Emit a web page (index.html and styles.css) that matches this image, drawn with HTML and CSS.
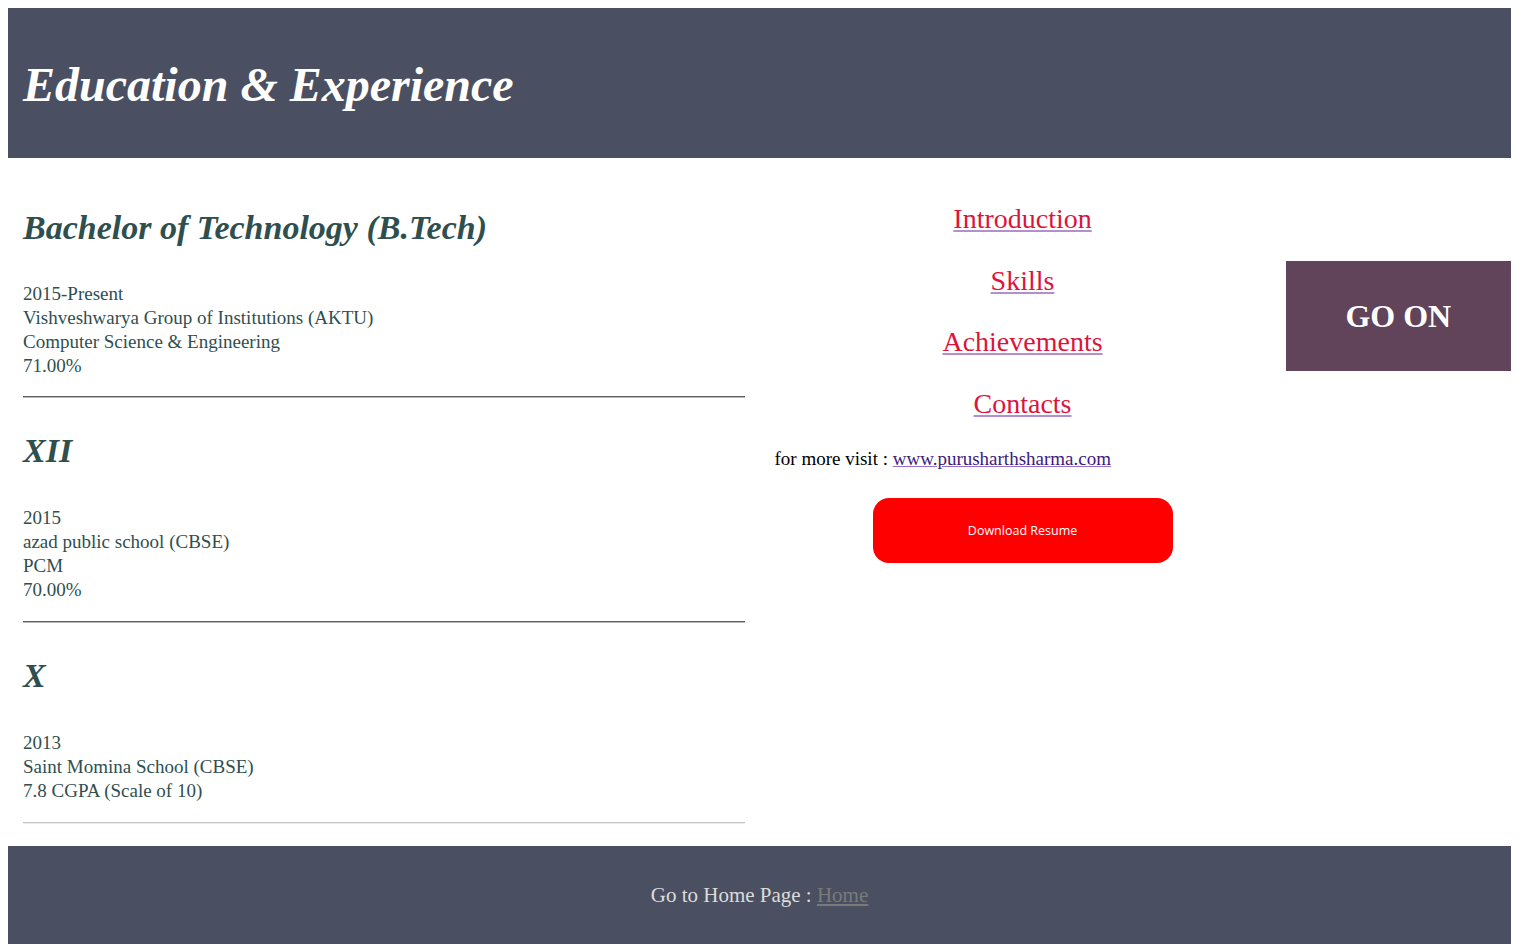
FILE: index.html
```html
<!DOCTYPE html>
<html lang="en">
<head>
<meta charset="utf-8">
<title>Education &amp; Experience</title>
<link rel="stylesheet" href="styles.css">
</head>
<body>
<header class="top">
  <h1 class="title">Education &amp; Experience</h1>
</header>
<main class="main">
  <section class="edu">
    <div class="entry">
      <h2 class="degree">Bachelor of Technology (B.Tech)</h2>
      <p class="info">2015-Present<br>Vishveshwarya Group of Institutions (AKTU)<br>Computer Science &amp; Engineering<br>71.00%</p>
      <hr class="rule">
    </div>
    <div class="entry">
      <h2 class="degree">XII</h2>
      <p class="info">2015<br>azad public school (CBSE)<br>PCM<br>70.00%</p>
      <hr class="rule">
    </div>
    <div class="entry">
      <h2 class="degree">X</h2>
      <p class="info">2013<br>Saint Momina School (CBSE)<br>7.8 CGPA (Scale of 10)</p>
      <hr class="rule light">
    </div>
  </section>
  <nav class="side">
    <ul class="links">
      <li><a href="#">Introduction</a></li>
      <li><a href="#">Skills</a></li>
      <li><a href="#">Achievements</a></li>
      <li><a href="#">Contacts</a></li>
    </ul>
    <p class="visit">for more visit : <a href="#">www.purusharthsharma.com</a></p>
    <button class="download" type="button">Download Resume</button>
  </nav>
  <aside class="goon-col">
    <div class="goon">GO ON</div>
  </aside>
</main>
<footer class="foot">
  <p class="foot-text">Go to Home Page : <a href="#">Home</a></p>
</footer>
</body>
</html>
```

FILE: styles.css
```css
body {
  margin: 8px;
  font-family: "Liberation Serif", "Times New Roman", serif;
  background: #ffffff;
}

.top {
  background: #4a5061;
  height: 150px;
  display: flex;
  align-items: center;
  padding: 0 15px;
}

.title {
  margin: 0;
  color: #ffffff;
  font-size: 48px;
  font-style: italic;
  font-weight: bold;
  line-height: 56px;
  padding-top: 4px;
}

.main {
  display: flex;
  align-items: flex-start;
}

.edu {
  width: 50%;
  padding: 0 15px;
  box-sizing: border-box;
  color: #2f4f4f;
}

.entry {
  padding-top: 33px;
}

.entry:first-child {
  padding-top: 50px;
}

.degree {
  margin: 0;
  font-size: 34px;
  line-height: 40px;
  font-style: italic;
  font-weight: bold;
}

.info {
  margin: 35px 0 0;
  font-size: 19px;
  line-height: 24px;
}

.entry:first-child .info {
  margin-top: 34px;
}

.rule {
  margin: 19px 0 0;
  border: 0;
  height: 0;
  border-top: 1px solid #5e5e5e;
  border-bottom: 1px solid #b8b8b8;
}

.entry:first-child .rule {
  margin-top: 18px;
}

.rule.light {
  border-top: 1px solid #c4c4c4;
  border-bottom: 1px solid #ececec;
}

.side {
  width: 35%;
  padding: 30px 15px 0;
  box-sizing: border-box;
  display: flex;
  flex-direction: column;
  align-items: center;
}

.links {
  list-style: none;
  margin: 0;
  padding: 0;
  text-align: center;
}

.links li {
  line-height: 61.6px;
  font-size: 28px;
}

.links a {
  color: #dc143c;
  text-decoration: underline;
  text-decoration-color: #b48fd0;
}

.visit {
  align-self: stretch;
  margin: 13px 0 0;
  font-size: 19px;
  line-height: 24px;
  color: #000000;
}

.visit a {
  color: #3d1a7a;
  text-decoration: underline;
  text-decoration-color: #9a6fc8;
}

.download {
  margin-top: 27px;
  width: 300px;
  height: 65px;
  border: 0;
  border-radius: 16px;
  background: #ff0000;
  color: #ffffff;
  font-family: "Open Sans", "Noto Sans", sans-serif;
  font-size: 12.5px;
}

.goon-col {
  width: 15%;
  padding-top: 103px;
}

.goon {
  background: #614459;
  height: 110px;
  display: flex;
  align-items: center;
  justify-content: center;
  color: #ffffff;
  font-size: 32px;
  font-weight: bold;
}

.foot {
  margin-top: 22px;
  background: #4a5061;
  padding: 37px 0;
  text-align: center;
}

.foot-text {
  margin: 0;
  font-size: 21px;
  line-height: 24px;
  color: #dcdcdc;
}

.foot-text a {
  color: #7a7a7a;
}
```
